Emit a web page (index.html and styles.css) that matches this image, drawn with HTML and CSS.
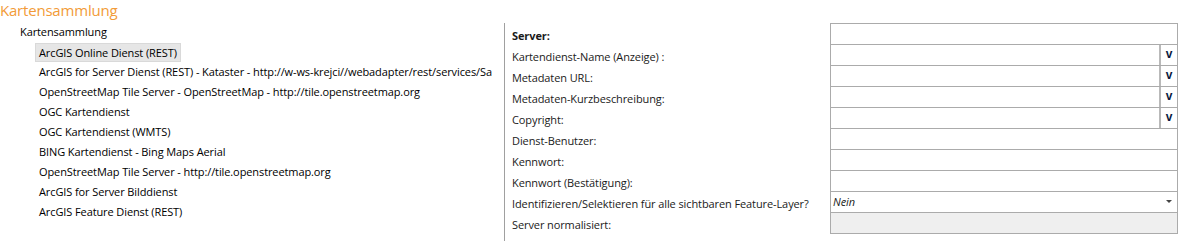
FILE: index.html
```html
<!DOCTYPE html>
<html>
<head>
<meta charset="utf-8">
<link rel="stylesheet" href="styles.css">
</head>
<body>
<div class="page_title">Kartensammlung</div>
<div class="main">
  <div class="tree">
    <div class="tree_root">Kartensammlung</div>
    <div class="tree_item selected">ArcGIS Online Dienst (REST)</div>
    <div class="tree_item">ArcGIS for Server Dienst (REST) - Kataster - http://w-ws-krejci//webadapter/rest/services/Sa</div>
    <div class="tree_item">OpenStreetMap Tile Server - OpenStreetMap - http://tile.openstreetmap.org</div>
    <div class="tree_item">OGC Kartendienst</div>
    <div class="tree_item">OGC Kartendienst (WMTS)</div>
    <div class="tree_item">BING Kartendienst - Bing Maps Aerial</div>
    <div class="tree_item">OpenStreetMap Tile Server - http://tile.openstreetmap.org</div>
    <div class="tree_item">ArcGIS for Server Bilddienst</div>
    <div class="tree_item">ArcGIS Feature Dienst (REST)</div>
  </div>
  <div class="props">
    <div class="prop_row">
      <div class="prop_label bold">Server:</div>
      <div class="prop_field"></div>
    </div>
    <div class="prop_row">
      <div class="prop_label">Kartendienst-Name (Anzeige) :</div>
      <div class="prop_field"><span class="field_text"></span><span class="field_btn">v</span></div>
    </div>
    <div class="prop_row">
      <div class="prop_label">Metadaten URL:</div>
      <div class="prop_field"><span class="field_text"></span><span class="field_btn">v</span></div>
    </div>
    <div class="prop_row">
      <div class="prop_label">Metadaten-Kurzbeschreibung:</div>
      <div class="prop_field"><span class="field_text"></span><span class="field_btn">v</span></div>
    </div>
    <div class="prop_row">
      <div class="prop_label">Copyright:</div>
      <div class="prop_field"><span class="field_text"></span><span class="field_btn">v</span></div>
    </div>
    <div class="prop_row">
      <div class="prop_label">Dienst-Benutzer:</div>
      <div class="prop_field"></div>
    </div>
    <div class="prop_row">
      <div class="prop_label">Kennwort:</div>
      <div class="prop_field"></div>
    </div>
    <div class="prop_row">
      <div class="prop_label">Kennwort (Bestätigung):</div>
      <div class="prop_field"></div>
    </div>
    <div class="prop_row">
      <div class="prop_label">Identifizieren/Selektieren für alle sichtbaren Feature-Layer?</div>
      <div class="prop_field combo"><span class="field_text italic">Nein</span><span class="combo_arrow"></span></div>
    </div>
    <div class="prop_row">
      <div class="prop_label">Server normalisiert:</div>
      <div class="prop_field disabled"></div>
    </div>
  </div>
</div>
</body>
</html>
```

FILE: styles.css
```css
html, body{
  height: 100%;
}
body{
  margin: 0;
  display: flex;
  flex-direction: column;
  background-color: #ffffff;
  font-family: 'Open Sans', 'Noto Sans', sans-serif;
  font-size: 11px;
  letter-spacing: -0.1px;
  color: #000000;
  overflow: hidden;
}

.page_title{
  height: 22px;
  line-height: 21px;
  font-size: 15px;
  letter-spacing: -0.2px;
  color: #f29b38;
  white-space: nowrap;
}

.main{
  display: flex;
  flex: 1;
  min-height: 0;
}

/* left tree */
.tree{
  width: 492px;
  margin-right: 12px;
  overflow: hidden;
  white-space: nowrap;
}
.tree_root{
  height: 20px;
  line-height: 20px;
  padding-left: 20px;
}
.tree_item{
  height: 20px;
  line-height: 20px;
  margin-left: 35px;
  padding: 0 4px;
}
.tree_item.selected{
  display: inline-block;
  box-sizing: border-box;
  height: 19px;
  line-height: 17px;
  margin-top: 1px;
  background-color: #e6e6e6;
  border: 1px solid #d9d9d9;
  padding: 0 3px;
}

/* right property grid */
.props{
  flex: 1;
  border-left: 1px solid #a0a0a0;
  margin-top: 1px;
  padding-left: 7px;
}
.prop_row{
  display: flex;
  height: 21px;
}
.prop_label{
  box-sizing: border-box;
  width: 318px;
  height: 21px;
  line-height: 17px;
  padding-top: 4px;
  color: #1a1a1a;
  white-space: nowrap;
  overflow: hidden;
}
.bold{
  font-weight: bold;
}
.prop_field{
  display: flex;
  box-sizing: border-box;
  width: 348px;
  height: 22px;
  border: 1px solid #ababab;
  background-color: #ffffff;
}
.field_text{
  flex: 1;
  line-height: 20px;
  padding-left: 2px;
}
.italic{
  font-style: italic;
  color: #1a1a1a;
}
.field_btn{
  width: 16px;
  border-left: 2px solid #b9b9b9;
  text-align: center;
  font-weight: bold;
  font-family: 'Liberation Sans', sans-serif;
  font-size: 12px;
  letter-spacing: 0;
  line-height: 19px;
  color: #0a1a40;
}
.combo_arrow{
  width: 0;
  height: 0;
  margin: 8px 5px 0 0;
  border-left: 3px solid transparent;
  border-right: 3px solid transparent;
  border-top: 3px solid #444444;
}
.disabled{
  background-color: #efefef;
}
```
